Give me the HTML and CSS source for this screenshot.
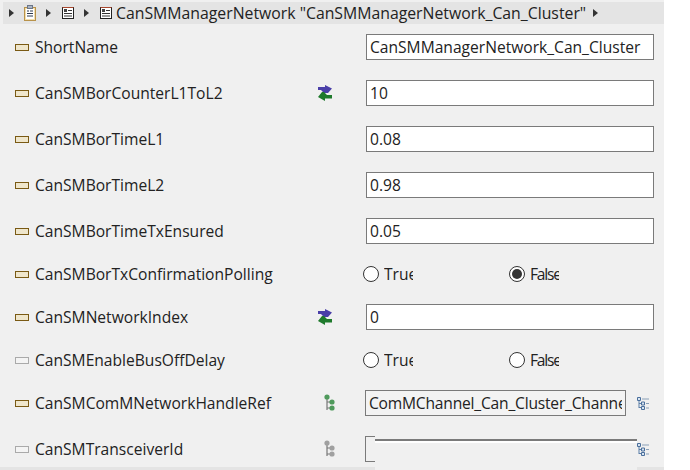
FILE: index.html
```html
<!DOCTYPE html>
<html lang="en">
<head>
  <meta charset="UTF-8" />
  <title>CanSMManagerNetwork</title>
  <link rel="stylesheet" href="styles.css">
</head>
<body>
<svg class="defs" width="0" height="0">
  <symbol id="obj" viewBox="0 0 12 12">
    <rect x="0.5" y="0.5" width="11" height="11" fill="#fff" stroke="#222"/>
    <path d="M0.5 0.5h11" stroke="#a8452c"/>
    <rect x="2" y="2" width="3" height="3" fill="#444"/>
    <path d="M6 3.5h4M2 6.5h8M2 9h8" stroke="#333"/>
  </symbol>
  <symbol id="swap" viewBox="0 0 14 16">
    <path d="M0 2h7V0l7 3.500-4 4.500H6L3 5H0z" fill="#4a3fa8"/>
    <path d="M6 7l3 3h5v3.500H7V16L0 12l4-5z" fill="#1f7a2c"/>
  </symbol>
  <symbol id="tree" viewBox="0 0 11 18">
    <path d="M3 3v13M3 8h5M3 14h5" stroke="#777" stroke-width="1.2" fill="none"/>
    <circle cx="3" cy="3" r="2.6" fill="currentColor"/>
    <circle cx="8" cy="8" r="2.6" fill="currentColor"/>
    <circle cx="8" cy="14" r="2.6" fill="currentColor"/>
  </symbol>
  <symbol id="list" viewBox="0 0 12 13">
    <path d="M2 3v8M2 6.5h3M2 10.5h3" stroke="#5b7fa8" fill="none"/>
    <path d="M0.5 0.5h3v3h-3zM4.500 5h3v3h-3zM4.500 9.500h3v3h-3z" fill="#d8e4f0" stroke="#4a6f9c"/>
    <path d="M5 2h7M9 6.500h3M9 11h3" stroke="#8aa0b8"/>
  </symbol>
</svg>

<div class="page">
  <div class="crumbs">
    <span class="arrow"></span>
    <svg class="clip" width="12" height="16" viewBox="0 0 12 16">
      <rect x="0.5" y="2.500" width="11" height="13" fill="#f3dfae" stroke="#b8924a"/>
      <rect x="2" y="4" width="8" height="10" fill="#fff"/>
      <rect x="3.500" y="0.500" width="5" height="3" fill="#aab4c4" stroke="#6b7688"/>
      <path d="M3 6h2M6 6h3M3 8.500h6M3 11h6" stroke="#2c3a50"/>
    </svg>
    <span class="arrow"></span>
    <svg class="obj" width="12" height="12"><use href="#obj"/></svg>
    <span class="arrow"></span>
    <svg class="obj" width="12" height="12"><use href="#obj"/></svg>
    <span class="crumb-text">CanSMManagerNetwork "CanSMManagerNetwork_Can_Cluster"</span>
    <span class="arrow"></span>
  </div>

  <div class="row">
    <span class="marker"></span>
    <span class="name">ShortName</span>
    <span></span>
    <input class="field" type="text" value="CanSMManagerNetwork_Can_Cluster" readonly>
  </div>
  <div class="row">
    <span class="marker"></span>
    <span class="name">CanSMBorCounterL1ToL2</span>
    <svg class="side" width="14" height="16"><use href="#swap"/></svg>
    <input class="field" type="text" value="10" readonly>
  </div>
  <div class="row">
    <span class="marker"></span>
    <span class="name">CanSMBorTimeL1</span>
    <span></span>
    <input class="field" type="text" value="0.08" readonly>
  </div>
  <div class="row">
    <span class="marker"></span>
    <span class="name">CanSMBorTimeL2</span>
    <span></span>
    <input class="field" type="text" value="0.98" readonly>
  </div>
  <div class="row">
    <span class="marker"></span>
    <span class="name">CanSMBorTimeTxEnsured</span>
    <span></span>
    <input class="field" type="text" value="0.05" readonly>
  </div>
  <div class="row short">
    <span class="marker"></span>
    <span class="name">CanSMBorTxConfirmationPolling</span>
    <span></span>
    <div class="radios">
      <div class="radio"><span class="dot"></span><span class="radio-text">True</span></div>
      <div class="radio"><span class="dot on"></span><span class="radio-text tight">False</span></div>
    </div>
  </div>
  <div class="row">
    <span class="marker"></span>
    <span class="name">CanSMNetworkIndex</span>
    <svg class="side" width="14" height="16"><use href="#swap"/></svg>
    <input class="field" type="text" value="0" readonly>
  </div>
  <div class="row short">
    <span class="marker off"></span>
    <span class="name">CanSMEnableBusOffDelay</span>
    <span></span>
    <div class="radios">
      <div class="radio"><span class="dot"></span><span class="radio-text">True</span></div>
      <div class="radio"><span class="dot"></span><span class="radio-text tight">False</span></div>
    </div>
  </div>
  <div class="row">
    <span class="marker"></span>
    <span class="name">CanSMComMNetworkHandleRef</span>
    <svg class="side tree" width="11" height="18"><use href="#tree"/></svg>
    <div class="ref">
      <input class="field ref-field" type="text" value="ComMChannel_Can_Cluster_Channel" readonly>
      <svg width="12" height="13"><use href="#list"/></svg>
    </div>
  </div>
  <div class="row">
    <span class="marker off"></span>
    <span class="name">CanSMTransceiverId</span>
    <svg class="side tree off" width="11" height="18"><use href="#tree"/></svg>
    <div class="ref">
      <div class="field ref-field empty"></div>
      <svg width="12" height="13"><use href="#list"/></svg>
    </div>
  </div>

  <div class="footer-strip"></div>
  <div class="ghost"></div>
</div>
</body>
</html>
```

FILE: styles.css
```css
* {
  box-sizing: border-box;
}

body {
  margin: 0;
  background: #ffffff;
  font-family: "Open Sans", "Noto Sans", sans-serif;
  font-size: 15.6px;
  color: #222;
}

.defs {
  position: absolute;
}

.page {
  position: relative;
  width: 664px;
  height: 470px;
  overflow: hidden;
  background: #f0f0f0;
  padding-top: 2px;
}

.crumbs {
  display: flex;
  align-items: center;
  height: 22px;
  margin-left: 3px;
  padding-left: 6px;
  background: #e4e4e4;
}

.arrow {
  width: 0;
  height: 0;
  border-left: 5px solid #333;
  border-top: 4.5px solid transparent;
  border-bottom: 4.5px solid transparent;
}

.clip {
  margin: 0 10px;
}

.obj {
  margin: 0 10px 0 11px;
}

.obj:last-of-type {
  margin-right: 6px;
}

.crumb-text {
  margin-right: 7px;
  margin-left: -2px;
  font-size: 15.8px;
  white-space: nowrap;
}

.row {
  display: grid;
  grid-template-columns: 20px 283px 45px 1fr;
  align-items: center;
  height: 46px;
  padding-left: 15px;
}

.row.short {
  height: 40px;
}

.marker {
  width: 14px;
  height: 7px;
  border: 1px solid #7a5a14;
  background: #efe6cc;
}

.marker.off {
  border-color: #aaa;
  background: #f4f4f4;
}

.name {
  white-space: nowrap;
  overflow: hidden;
}

.side {
  justify-self: start;
}

.tree {
  margin-left: 6px;
  color: #4f9a5c;
}

.tree.off {
  color: #a0a0a0;
}

.field {
  width: 288px;
  height: 26px;
  margin-left: 3px;
  padding: 0 3px;
  border: 1px solid #7a7a7a;
  border-radius: 0;
  outline: none;
  background: #fff;
  font: inherit;
  color: inherit;
}

.ref {
  display: flex;
  align-items: center;
  gap: 11px;
}

.ref-field {
  width: 261px;
  margin-left: 2px;
  background: #f3f3f3;
  letter-spacing: -0.2px;
}

.empty {
  background: #f0f0f0;
}

.radios {
  display: flex;
}

.radio {
  display: flex;
  align-items: center;
  gap: 5px;
  width: 146px;
}

.dot {
  position: relative;
  width: 16px;
  height: 16px;
  border: 1px solid #333;
  border-radius: 50%;
  background: #fff;
}

.dot.on::after {
  content: "";
  position: absolute;
  top: 2px;
  left: 2px;
  width: 10px;
  height: 10px;
  border-radius: 50%;
  background: #333;
}

.radio-text {
  width: 29px;
  overflow: hidden;
}

.radio-text.tight {
  letter-spacing: -1.2px;
}

.footer-strip {
  position: absolute;
  left: 0;
  right: 0;
  bottom: 0;
  height: 3px;
  background: #e4e4e4;
}

/* half painted field, its top edge sits lower than the box behind it */
.ghost {
  position: absolute;
  left: 375px;
  top: 435px;
  width: 262px;
  height: 35px;
  background: linear-gradient(#f0f0f0 4px, #7a7a7a 4px, #7a7a7a 6px, #fff 6px, #fff 8px, #f0f0f0 8px);
}
```
